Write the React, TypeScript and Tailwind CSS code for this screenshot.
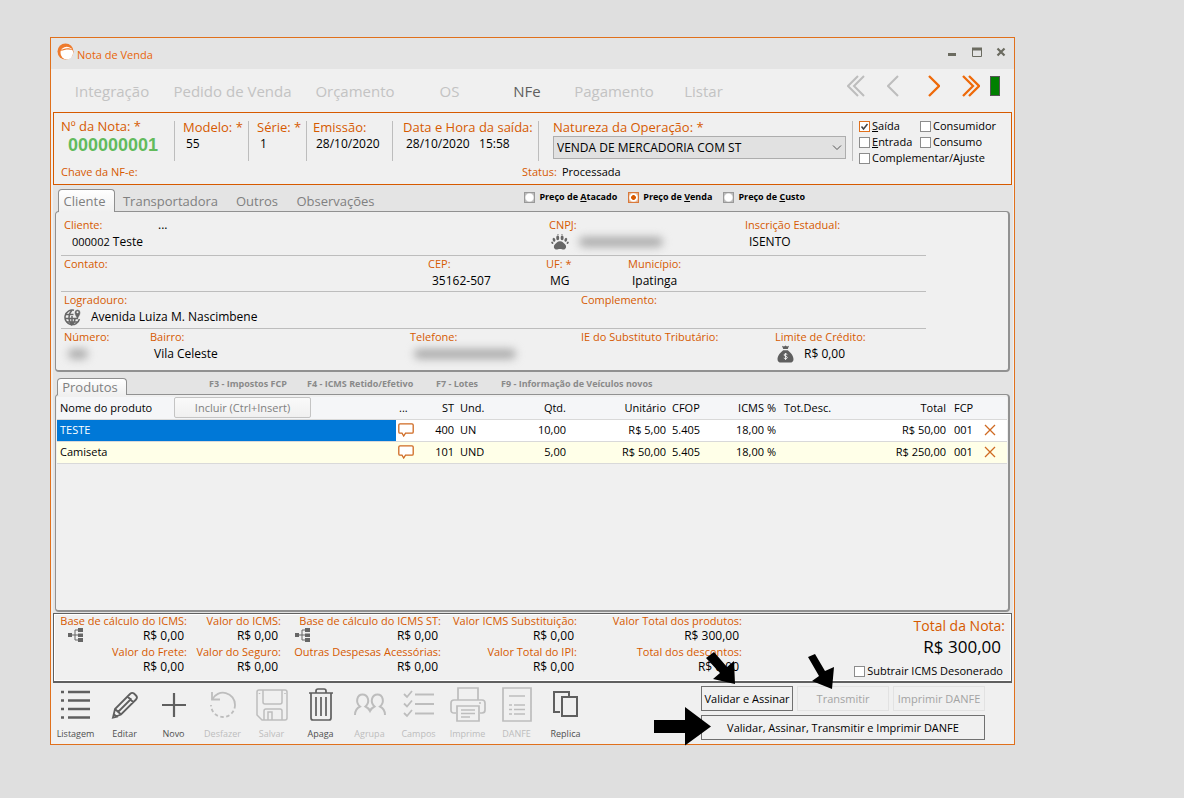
import type { ReactNode } from "react";

const SANS = "font-['Open_Sans','Noto_Sans',sans-serif]";

function Check({ children, checked = false }: { children: ReactNode; checked?: boolean }) {
  return (
    <label className="relative flex h-4 items-center gap-[2px] whitespace-nowrap text-[11px] leading-4 text-black">
      <input
        type="checkbox"
        defaultChecked={checked}
        className="peer h-[11px] w-[11px] shrink-0 appearance-none border border-[#8c8c8c] bg-white checked:border-[#e0701c]"
      />
      <svg
        viewBox="0 0 11 11"
        className="pointer-events-none absolute left-0 hidden h-[11px] w-[11px] peer-checked:block"
        fill="none"
        stroke="#444"
        strokeWidth="1.5"
      >
        <path d="M2.5 5.5 4.5 8 8.5 3" />
      </svg>
      <span>{children}</span>
    </label>
  );
}

function PriceRadio({ letter, rest, checked = false }: { letter: string; rest: string; checked?: boolean }) {
  return (
    <label className="flex items-center gap-1 whitespace-nowrap text-[9px] font-bold leading-4 text-black">
      <input
        type="radio"
        name="preco"
        defaultChecked={checked}
        className="h-[11px] w-[11px] shrink-0 appearance-none border border-[#999] bg-white bg-[radial-gradient(circle,#fff_55%,#bbb_75%)] checked:border-[#d9793a] checked:bg-[radial-gradient(circle,#d85a00_32%,#fff_42%,#fff_55%,#e3b08c_80%)]"
      />
      <span>
        Preço de <u>{letter}</u>
        {rest}
      </span>
    </label>
  );
}

function HeadField({ label, value, className }: { label: string; value: string; className: string }) {
  return (
    <div className={`mt-[3px] h-10 shrink-0 whitespace-nowrap border-l border-[#bdbdbd] ${className}`}>
      <div className="text-[13px] leading-[13px] text-[#d65a00]">{label}</div>
      <div className="mt-[2px] whitespace-pre pl-[3px] text-[12px] leading-4 text-black">{value}</div>
    </div>
  );
}

function Field({ label, value, icon, className = "" }: { label: string; value?: ReactNode; icon?: ReactNode; className?: string }) {
  return (
    <div className={`shrink-0 whitespace-nowrap ${className}`}>
      <div className="text-[11px] leading-4 text-[#d65a00]">{label}</div>
      <div className="mt-px flex h-4 items-center gap-2 text-[12px] leading-4 text-black">
        {icon}
        <span className={icon ? "pl-[2px]" : "pl-1"}>{value}</span>
      </div>
    </div>
  );
}

function Hidden({ className }: { className: string }) {
  return <span aria-hidden="true" className={`block h-[10px] rounded-full bg-[#ababab] blur-[4px] ${className}`} />;
}

function Paw() {
  return (
    <svg viewBox="0 0 18 16" className="ml-[2px] h-4 w-[18px]" fill="#666">
      <path d="M9 7.2c2.6 0 3.4 1.6 5 3 1.7 1.500 1.300 4.600-.7 5.200-1.500.4-2.300-.5-4.300-.5s-2.800.9-4.300.5c-2-.6-2.400-3.700-.7-5.200 1.600-1.400 2.400-3 5-3z" />
      <ellipse cx="6.700" cy="3.900" rx="1.500" ry="2.300" />
      <ellipse cx="11.100" cy="3.900" rx="1.500" ry="2.300" />
      <ellipse cx="3" cy="5.800" rx="1.300" ry="2" transform="rotate(-20 3 5.800)" />
      <ellipse cx="14.800" cy="5.800" rx="1.300" ry="2" transform="rotate(20 14.800 5.800)" />
      <ellipse cx="1.300" cy="8.800" rx=".9" ry="1.300" transform="rotate(-30 1.300 8.800)" />
      <ellipse cx="16.700" cy="8.800" rx=".9" ry="1.300" transform="rotate(30 16.700 8.800)" />
      <circle cx="7" cy=".7" r=".6" />
      <circle cx="11" cy=".7" r=".6" />
    </svg>
  );
}

function Globe() {
  return (
    <svg viewBox="0 0 17 18" className="h-[18px] w-[17px]" fill="none" stroke="#666" strokeWidth="1.500">
      <path d="M10 2.200A7.300 7.300 0 1 0 15.400 11" />
      <path d="M8 2.200C4 6 4 13 8 16.700M8 8v8.700c2-1.700 3-4 3-6.500M1.500 6.500h8M1 10.500h13M2.500 14h11" />
      <path d="M13.500 10.500c-1.500-2.600-2.500-4-2.500-6a2.500 2.500 0 0 1 5 0c0 2-1 3.400-2.500 6z" fill="#666" strokeWidth=".5" />
      <circle cx="13.500" cy="4.300" r="1" fill="#f0f0f0" stroke="none" />
    </svg>
  );
}

function MoneyBag() {
  return (
    <svg viewBox="0 0 17 18" className="ml-[2px] h-[18px] w-[17px]">
      <path d="M5 .8 7 1.600 8.500.5 10 1.600 12 .8 10.800 4H6.200zM6.200 5.200h4.600c3 2.300 5.700 5.500 5.700 9 0 2.500-1.500 3.300-3.500 3.300H4c-2 0-3.500-.8-3.500-3.300 0-3.500 2.700-6.700 5.700-9z" fill="#5f5f5f" />
      <path d="M10.300 9.500C9.700 8.800 7 8.600 7 10s3.300 1 3.300 2.500-2.700 1.300-3.500.5M8.600 8v7" fill="none" stroke="#f0f0f0" strokeWidth="1" />
    </svg>
  );
}

function Tree() {
  return (
    <svg viewBox="0 0 15 14" className="h-[14px] w-[15px]" fill="#666">
      <path d="M0 5h4v4H0zM10 0h5v4h-5zM10 5.500h5v3.500h-5zM10 10h5v4h-5z" />
      <path d="M4 7h6M10 2H7v10h3" fill="none" stroke="#666" />
    </svg>
  );
}

function Balloon() {
  return (
    <svg viewBox="0 0 16 14" className="ml-[2px] h-[14px] w-4" fill="#fff" stroke="#cf6a22" strokeWidth="1.300">
      <path d="M2 .8h12c.8 0 1.200.5 1.200 1.200v7c0 .8-.5 1.200-1.200 1.200H7.500L5.700 13 4 10.200H2C1.200 10.200.8 9.700.8 9V2C.8 1.300 1.200.8 2 .8z" />
    </svg>
  );
}

function Cross() {
  return (
    <svg viewBox="0 0 12 12" className="h-3 w-3" fill="none" stroke="#cf6a22" strokeWidth="1.300">
      <path d="m1 1 10 10M11 1 1 11" />
    </svg>
  );
}

const menu = [
  { name: "Integração", width: "w-[100px]" },
  { name: "Pedido de Venda", width: "w-[141px]" },
  { name: "Orçamento", width: "w-[104px]" },
  { name: "OS", width: "w-[85px]" },
  { name: "NFe", width: "w-[70px]" },
  { name: "Pagamento", width: "w-[104px]" },
  { name: "Listar", width: "w-[75px]" },
];

const products = [
  { name: "TESTE", st: "400", unit: "UN", qty: "10,00", price: "R$ 5,00", cfop: "5.405", icms: "18,00 %", total: "R$ 50,00", fcp: "001" },
  { name: "Camiseta", st: "101", unit: "UND", qty: "5,00", price: "R$ 50,00", cfop: "5.405", icms: "18,00 %", total: "R$ 250,00", fcp: "001" },
];

const totals = [
  [
    { label: "Base de cálculo do ICMS:", value: "R$ 0,00", tree: true },
    { label: "Valor do Frete:", value: "R$ 0,00", tree: false },
  ],
  [
    { label: "Valor do ICMS:", value: "R$ 0,00", tree: false },
    { label: "Valor do Seguro:", value: "R$ 0,00", tree: false },
  ],
  [
    { label: "Base de cálculo do ICMS ST:", value: "R$ 0,00", tree: true },
    { label: "Outras Despesas Acessórias:", value: "R$ 0,00", tree: false },
  ],
  [
    { label: "Valor ICMS Substituição:", value: "R$ 0,00", tree: false },
    { label: "Valor Total do IPI:", value: "R$ 0,00", tree: false },
  ],
  [
    { label: "Valor Total dos produtos:", value: "R$ 300,00", tree: false },
    { label: "Total dos descontos:", value: "R$ 0,00", tree: false },
  ],
];

const tools: { name: string; on: boolean; art: ReactNode }[] = [
  {
    name: "Listagem",
    on: true,
    art: <path d="M3 5h3M3 13.500h3M3 22h3M3 30.500h3M10 5h22M10 13.500h22M10 22h22M10 30.500h22" strokeWidth="2.500" />,
  },
  {
    name: "Editar",
    on: true,
    art: <path d="M6 30.500 8 22 23 7q2-2 4-.5l2 2q2 2 0 4L14 27.500zM8 22l6 5.500M20.500 9.500l6 6M11 25 24.500 11.500M6 30.500l3.500-.8-2.500-2.500z" strokeWidth="1.800" />,
  },
  { name: "Novo", on: true, art: <path d="M18 6v24M6 18h24" strokeWidth="2.200" /> },
  {
    name: "Desfazer",
    on: false,
    art: (
      <>
        <path d="M7 5v7.500h8" strokeWidth="1.800" />
        <path d="M7.200 12.500A12 12 0 0 1 30 18" strokeWidth="1.800" />
        <path d="M30 18A12 12 0 0 1 6 18" strokeWidth="1.800" strokeDasharray="3.500 2.500" />
      </>
    ),
  },
  {
    name: "Salvar",
    on: false,
    art: (
      <path d="M3 5q0-2 2-2h26q2 0 2 2v26q0 2-2 2H8l-5-5zM9 3v12q0 2 2 2h15q2 0 2-2V3M10 33V24q0-2 2-2h14q2 0 2 2v9M14 25h4v8h-4zM5.500 6v1M31 6v1" strokeWidth="1.500" />
    ),
  },
  {
    name: "Apaga",
    on: true,
    art: <path d="M6 6h24M8 6v25q0 2 2 2h16q2 0 2-2V6M13 6V4q0-2 2-2h6q2 0 2 2v2M13 10v19M18 10v19M23 10v19" strokeWidth="1.700" />,
  },
  {
    name: "Agrupa",
    on: false,
    art: (
      <path d="M3 28c0-5 2-7 5-8.500-5-4-3-12 2.500-12s8 7.500 3 12c2 1 3.500 2.500 4.500 4.500 1-2 2.500-3.500 4.500-4.500-5-4.500-2.500-12 3-12s7.500 8 2.500 12c3 1.500 5 3.500 5 8.500" strokeWidth="2" />
    ),
  },
  {
    name: "Campos",
    on: false,
    art: <path d="m3 7 3 3 5-6M3 16.500l3 3 5-6M3 26l3 3 5-6M14 7.500h19M14 17h19M14 26.500h19" strokeWidth="1.800" />,
  },
  {
    name: "Imprime",
    on: false,
    art: (
      <path d="M8 13V1h20v12M6 26H4q-3 0-3-3v-7q0-3 3-3h28q3 0 3 3v7q0 3-3 3h-2M7 19h22v15H7zM11 23h14M11 26.500h14M11 30h9M29 16h2" strokeWidth="1.700" />
    ),
  },
  {
    name: "DANFE",
    on: false,
    art: <path d="M4 1h28v33H4zM10 9h16M10 18h3M15 18h11M10 22.500h3M15 22.500h11M10 27h3M15 27h11" strokeWidth="1.700" />,
  },
  {
    name: "Replica",
    on: true,
    art: <path d="M12 25H6V5h15v5M14 10h15v19H14z" strokeWidth="2" />,
  },
];

export default function App() {
  return (
    <div className={`flex min-h-screen bg-[#dfdfdf] pb-[53px] pl-[50px] pr-[169px] pt-[37px] ${SANS}`}>
      <main className="relative flex min-w-0 flex-1 flex-col border border-[#e0701c] bg-[#f0f0f0]">
        <header className="flex h-[31px] shrink-0 items-center justify-between bg-[#e4e4e4] pl-[6px] pr-[2px]">
          <div className="flex items-center gap-[3px]">
            <svg viewBox="0 0 17 17" className="mb-1 h-[17px] w-[17px]">
              <circle cx="8.500" cy="8.500" r="8" fill="#ee7a2c" />
              <circle cx="9.800" cy="10" r="6.300" fill="#fff" />
              <path d="M3.500 8C6 5.500 12 4 16 7c-4-1-8-.8-12.500 1z" fill="#ee7a2c" />
            </svg>
            <h1 className="pt-[2px] text-[11px] leading-4 text-[#e8650a]">Nota de Venda</h1>
          </div>
          <div className="flex items-center pb-[3px]">
            <button type="button" aria-label="Minimizar" className="flex h-6 w-6 items-center justify-center">
              <svg viewBox="0 0 10 10" className="h-[10px] w-[10px]">
                <path d="M1 6h8v3H1z" fill="#6b6b60" />
              </svg>
            </button>
            <button type="button" aria-label="Maximizar" className="flex h-6 w-[26px] items-center justify-center">
              <svg viewBox="0 0 10 10" className="h-[10px] w-[10px]">
                <path d="M.5 1v8.500h9V1" fill="none" stroke="#6b6b60" />
                <path d="M0 .5h10v3H0z" fill="#6b6b60" />
              </svg>
            </button>
            <button type="button" aria-label="Fechar" className="flex h-6 w-[22px] items-center justify-center">
              <svg viewBox="0 0 10 10" className="h-[10px] w-[10px]">
                <path d="m1.500 1.500 7 7M8.500 1.500l-7 7" stroke="#6b6b60" strokeWidth="2.200" />
              </svg>
            </button>
          </div>
        </header>

        <div className="flex min-h-0 flex-1 flex-col px-[2px]">
          <div className="flex h-[43px] shrink-0 items-center justify-between">
            <nav className="ml-[9px] flex">
              {menu.map((m) => (
                <button
                  key={m.name}
                  type="button"
                  className={`${m.width} whitespace-nowrap text-center text-[15px] leading-5 ${m.name === "NFe" ? "text-[#5f5f5f]" : "text-[#c3c3c3]"}`}
                >
                  {m.name}
                </button>
              ))}
            </nav>
            <div className="mb-[9px] mr-3 flex items-center">
              <button type="button" aria-label="Primeiro" className="w-10">
                <svg viewBox="0 0 18 22" className="h-[22px] w-[18px]" fill="none" stroke="#bdbdbd" strokeWidth="2">
                  <path d="M11 1 1 11l10 10M17 1 7 11l10 10" />
                </svg>
              </button>
              <button type="button" aria-label="Anterior" className="w-[41px]">
                <svg viewBox="0 0 12 22" className="h-[22px] w-3" fill="none" stroke="#bdbdbd" strokeWidth="2">
                  <path d="M11 1 1 11l10 10" />
                </svg>
              </button>
              <button type="button" aria-label="Próximo" className="w-[34px]">
                <svg viewBox="0 0 12 22" className="h-[22px] w-3" fill="none" stroke="#ee6a0a" strokeWidth="2.300">
                  <path d="m1 1 10 10L1 21" />
                </svg>
              </button>
              <button type="button" aria-label="Último" className="w-7">
                <svg viewBox="0 0 18 22" className="h-[22px] w-[18px]" fill="none" stroke="#ee6a0a" strokeWidth="2.300">
                  <path d="m1 1 10 10L1 21M7 1l10 10L7 21" />
                </svg>
              </button>
              <div className="h-5 w-[10px] border border-[#555] bg-[#008000]" />
            </div>
          </div>

          <section className="flex h-[73px] shrink-0 flex-col border border-[#d65a00] pt-[5px]">
            <div className="flex h-[47px]">
              <div className="mt-[2px] w-[120px] shrink-0 whitespace-nowrap pl-[7px]">
                <div className="text-[13px] leading-[13px] text-[#d65a00]">Nº da Nota: *</div>
                <div className="mt-1 pl-[7px] font-['Liberation_Sans',sans-serif] text-[18px] font-bold leading-4 text-[#62bb5c]">
                  000000001
                </div>
              </div>
              <HeadField label="Modelo: *" value="55" className="w-[74px] pl-2" />
              <HeadField label="Série: *" value="1" className="w-[58px] pl-2" />
              <HeadField label="Emissão:" value="28/10/2020" className="w-[86px] pl-[6px]" />
              <HeadField label="Data e Hora da saída:" value="28/10/2020   15:58" className="w-[146px] pl-[10px]" />
              <div className="mt-[3px] h-10 min-w-0 flex-1 border-l border-[#bdbdbd] pl-[14px] pr-[6px]">
                <label htmlFor="natureza" className="block whitespace-nowrap text-[13px] leading-[13px] text-[#d65a00]">
                  Natureza da Operação: *
                </label>
                <div className="relative mt-[2px]">
                  <select
                    id="natureza"
                    className="block h-[23px] w-full appearance-none border border-[#adadad] bg-[#e1e1e1] pl-[3px] text-[12px] text-black"
                  >
                    <option>VENDA DE MERCADORIA COM ST</option>
                  </select>
                  <svg viewBox="0 0 10 6" className="pointer-events-none absolute right-1 top-[9px] h-[6px] w-[10px]" fill="none" stroke="#555">
                    <path d="m1 .5 4 4 4-4" />
                  </svg>
                </div>
              </div>
              <div className="w-[159px] shrink-0">
                <div className="flex">
                  <div className="mt-[3px] h-10 w-[7px] shrink-0 border-l border-[#bdbdbd]" />
                  <div>
                    <div className="flex">
                      <div className="w-[61px]">
                        <Check checked>
                          <u>S</u>aída
                        </Check>
                      </div>
                      <Check>Consumidor</Check>
                    </div>
                    <div className="flex">
                      <div className="w-[61px]">
                        <Check>
                          <u>E</u>ntrada
                        </Check>
                      </div>
                      <Check>Consumo</Check>
                    </div>
                    <Check>Complementar/Ajuste</Check>
                  </div>
                </div>
              </div>
            </div>
            <div className="flex pl-[7px] text-[11px] leading-[13px]">
              <div className="w-[461px] text-[#d65a00]">Chave da NF-e:</div>
              <div className="w-10 text-[#d65a00]">Status:</div>
              <div className="text-black">Processada</div>
            </div>
          </section>

          <div className="-mr-px flex min-h-0 flex-1 flex-col bg-[#e4e4e4] pl-[2px] pr-[3px]">
            <div className="flex h-[26px] shrink-0 items-end justify-between">
              <div role="tablist" className="flex items-end pl-[3px] text-[13px] leading-4 text-[#808080]">
                <button
                  type="button"
                  role="tab"
                  aria-selected="true"
                  className="relative z-10 -mb-px h-[23px] w-[57px] rounded-t-sm border border-b-0 border-[#8f8f8f] bg-linear-to-b from-white to-[#f0f0f0] pr-1"
                >
                  Cliente
                </button>
                <button type="button" role="tab" className="h-5 w-[111px]">Transportadora</button>
                <button type="button" role="tab" className="h-5 w-[62px]">Outros</button>
                <button type="button" role="tab" className="h-5 w-[95px]">Observações</button>
              </div>
              <div className="mb-[6px] mr-[205px] flex gap-[11px]">
                <PriceRadio letter="A" rest="tacado" />
                <PriceRadio letter="V" rest="enda" checked />
                <PriceRadio letter="C" rest="usto" />
              </div>
            </div>

            <section className="h-[161px] shrink-0 rounded-sm border border-b-2 border-r-2 border-[#919191] bg-[#f0f0f0] pl-[5px] pr-[82px]">
              <div className="flex h-11 border-b border-[#bdbdbd] pl-[3px] pt-[5px]">
                <Field
                  label="Cliente:"
                  value={
                    <>
                      <span className="pl-1 text-[11px]">000002</span> Teste
                    </>
                  }
                  className="w-[94px]"
                />
                <button type="button" aria-label="Procurar cliente" className="h-4 w-4 shrink-0 text-left text-[12px] leading-4 text-black">
                  ...
                </button>
                <div className="w-[375px] shrink-0" />
                <Field label="CNPJ:" icon={<Paw />} value={<Hidden className="w-[84px]" />} className="w-[196px]" />
                <Field label="Inscrição Estadual:" value="ISENTO" />
              </div>
              <div className="flex h-9 border-b border-[#bdbdbd] pl-[3px]">
                <Field label="Contato:" className="w-[364px]" />
                <Field label="CEP:" value="35162-507" className="w-[118px]" />
                <Field label="UF: *" value="MG" className="w-[82px]" />
                <Field label="Município:" value="Ipatinga" />
              </div>
              <div className="flex h-[37px] border-b border-[#bdbdbd] pl-[3px]">
                <Field label="Logradouro:" icon={<Globe />} value="Avenida Luiza M. Nascimbene" className="w-[517px]" />
                <Field label="Complemento:" />
              </div>
              <div className="flex pl-[3px]">
                <Field label="Número:" value={<Hidden className="w-5" />} className="w-[86px]" />
                <Field label="Bairro:" value="Vila Celeste" className="w-[260px]" />
                <Field label="Telefone:" value={<Hidden className="w-[102px]" />} className="w-[171px]" />
                <Field label="IE do Substituto Tributário:" className="w-[194px]" />
                <Field label="Limite de Crédito:" icon={<MoneyBag />} value="R$ 0,00" />
              </div>
            </section>

            <div className="flex h-[22px] shrink-0 items-end">
              <div role="tablist" className="pl-[2px]">
                <button
                  type="button"
                  role="tab"
                  aria-selected="true"
                  className="relative z-10 -mb-px block h-[17px] w-[70px] rounded-t-sm border border-b-0 border-[#8f8f8f] bg-linear-to-b from-white to-[#f0f0f0] pr-1 text-[13px] leading-4 text-[#808080]"
                >
                  Produtos
                </button>
              </div>
              <div className="mb-[2px] flex whitespace-nowrap pl-[82px] text-[9px] font-bold leading-4 text-[#8a8a8a]">
                <span className="w-[98px]">F3 - Impostos FCP</span>
                <span className="w-[129px]">F4 - ICMS Retido/Efetivo</span>
                <span className="w-[65px]">F7 - Lotes</span>
                <span>F9 - Informação de Veículos novos</span>
              </div>
            </div>

            <section className="mb-px min-h-[217px] flex-1 rounded-sm border border-b-2 border-r-2 border-[#919191] bg-[#f0f0f0] px-px pt-[2px]">
              <table className="w-full table-fixed border-collapse text-[11px] leading-4 text-black">
                <colgroup>
                  <col className="w-[339px]" />
                  <col className="w-[23px]" />
                  <col className="w-[38px]" />
                  <col className="w-[40px]" />
                  <col className="w-[72px]" />
                  <col className="w-[100px]" />
                  <col className="w-[44px]" />
                  <col className="w-[66px]" />
                  <col className="w-[60px]" />
                  <col />
                  <col className="w-[30px]" />
                  <col className="w-[31px]" />
                </colgroup>
                <thead>
                  <tr className="h-[22px] whitespace-nowrap border-b border-[#d9d9d9] bg-[#f5f6f8] [&>th]:p-0 [&>th]:font-normal">
                    <th className="text-left">
                      <div className="flex items-center">
                        <span className="w-[117px] pl-[3px]">Nome do produto</span>
                        <button
                          type="button"
                          className="h-[21px] w-[137px] rounded-xs border border-[#c4c4c4] bg-linear-to-b from-[#fafafa] to-[#f0f0f0] text-[11px] leading-4 text-[#808080]"
                        >
                          Incluir (Ctrl+Insert)
                        </button>
                      </div>
                    </th>
                    <th>
                      <div className="pl-[3px] text-left">...</div>
                    </th>
                    <th className="text-right">
                      <div className="pr-[3px]">ST</div>
                    </th>
                    <th>
                      <div className="pl-[3px] text-left">Und.</div>
                    </th>
                    <th className="text-right">
                      <div className="pr-[3px]">Qtd.</div>
                    </th>
                    <th className="text-right">
                      <div className="pr-[3px]">Unitário</div>
                    </th>
                    <th>
                      <div className="pl-[3px] text-left">CFOP</div>
                    </th>
                    <th className="text-right">
                      <div className="pr-[3px]">ICMS %</div>
                    </th>
                    <th>
                      <div className="pl-[5px] text-left">Tot.Desc.</div>
                    </th>
                    <th className="text-right">Total</th>
                    <th>
                      <div className="pl-2 text-left">FCP</div>
                    </th>
                    <th aria-label="Remover" />
                  </tr>
                </thead>
                <tbody>
                  {products.map((p, i) => (
                    <tr
                      key={p.name}
                      className={`h-[22px] whitespace-nowrap border-b border-[#d9d9d9] [&>td]:p-0 ${i === 0 ? "bg-white" : "bg-[#ffffe8]"}`}
                    >
                      <td className={i === 0 ? "bg-[#0078d7] text-white" : ""}>
                        <div className="pl-[3px]">{p.name}</div>
                      </td>
                      <td>
                        <button type="button" aria-label="Observação" className="block">
                          <Balloon />
                        </button>
                      </td>
                      <td className="text-right">
                        <div className="pr-[3px]">{p.st}</div>
                      </td>
                      <td>
                        <div className="pl-[3px]">{p.unit}</div>
                      </td>
                      <td className="text-right">
                        <div className="pr-[3px]">{p.qty}</div>
                      </td>
                      <td className="text-right">
                        <div className="pr-[3px]">{p.price}</div>
                      </td>
                      <td>
                        <div className="pl-[3px]">{p.cfop}</div>
                      </td>
                      <td className="text-right">
                        <div className="pr-[3px]">{p.icms}</div>
                      </td>
                      <td />
                      <td className="text-right">{p.total}</td>
                      <td>
                        <div className="pl-2">{p.fcp}</div>
                      </td>
                      <td>
                        <button type="button" aria-label="Remover produto" className="ml-2 block">
                          <Cross />
                        </button>
                      </td>
                    </tr>
                  ))}
                </tbody>
              </table>
            </section>
          </div>

          <section className="flex h-[70px] shrink-0 border border-b-2 border-[#606060] whitespace-nowrap text-[11px] shadow-[inset_0_0_0_1px_#fff]">
            <div className="grid shrink-0 grid-cols-[133px_94px_160px_136px_165px] text-right">
              {totals.map((col) => (
                <div key={col[0].label} className="flex flex-col gap-[2px]">
                  {col.map((t) => (
                    <div key={t.label}>
                      <div className="h-[14px] leading-[14px] text-[#d65a00]">{t.label}</div>
                      <div className="flex h-[15px] items-start justify-between pl-[14px] pr-[3px] text-[12px] leading-[15px] text-black">
                        <span>{t.tree && <Tree />}</span>
                        <span>{t.value}</span>
                      </div>
                    </div>
                  ))}
                </div>
              ))}
            </div>
            <div className="flex flex-1 flex-col items-end pr-[6px] pt-[2px]">
              <div className="text-[14px] leading-5 text-[#d65a00]">Total da Nota:</div>
              <div className="pr-1 text-[17px] leading-[22px] text-black">R$ 300,00</div>
              <div className="pr-[2px] pt-[5px]">
                <Check>Subtrair ICMS Desonerado</Check>
              </div>
            </div>
          </section>
        </div>

        <footer className="flex h-[61px] shrink-0 justify-between pr-[29px]">
          <div className="flex pt-1">
            {tools.map((t) => (
              <button
                key={t.name}
                type="button"
                disabled={!t.on}
                className={`flex w-[49px] flex-col items-center gap-1 whitespace-nowrap text-[9px] leading-[14px] ${t.on ? "text-[#4f4f4f]" : "text-[#bdbdbd]"}`}
              >
                <svg viewBox="0 0 36 36" className="h-9 w-9" fill="none" stroke={t.on ? "#5f5f5f" : "#bdbdbd"}>
                  {t.art}
                </svg>
                {t.name}
              </button>
            ))}
          </div>
          <div className="flex flex-col gap-1 pt-[3px] text-[11px] leading-4">
            <div className="flex gap-1">
              <button type="button" className="h-[25px] w-[92px] whitespace-nowrap border border-[#707070] text-black">
                Validar e Assinar
              </button>
              <button type="button" disabled className="h-[25px] w-[92px] whitespace-nowrap border border-[#e2e2e2] text-[#a3a3a3]">
                Transmitir
              </button>
              <button type="button" disabled className="h-[25px] w-[92px] whitespace-nowrap border border-[#e2e2e2] text-[#a3a3a3]">
                Imprimir DANFE
              </button>
            </div>
            <button type="button" className="h-[25px] whitespace-nowrap border border-[#707070] text-black">
              Validar, Assinar, Transmitir e Imprimir DANFE
            </button>
          </div>
        </footer>

        <svg
          viewBox="650 650 190 98"
          className="pointer-events-none absolute -bottom-1 right-[174px] h-[98px] w-[190px]"
          fill="#000"
          aria-hidden="true"
        >
          <path d="M706 658 714 652 727 667 734 661 735 684 713 679 720 673z" />
          <path d="M808 657 815 654 825 671 834 667 832 689 812 681 819 676z" />
          <path d="M654 720H685V707L711 726.500 685 745.500V733H654z" />
        </svg>
      </main>
    </div>
  );
}
